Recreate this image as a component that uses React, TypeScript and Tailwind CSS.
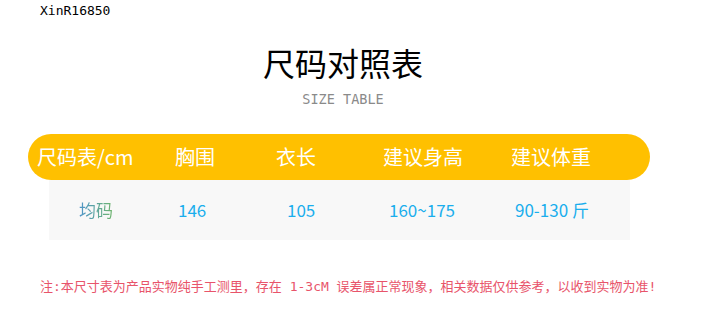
const HEAD = [
  { label: "尺码表/cm", w: "w-[138px]" },
  { label: "胸围", w: "w-[101px]" },
  { label: "衣长", w: "w-[107px]" },
  { label: "建议身高", w: "w-[128px]" },
  { label: "建议体重", w: "w-[120px]" },
];

const ROW = [
  { value: "146", w: "w-[109px]" },
  { value: "105", w: "w-[102px]" },
  { value: "160~175", w: "w-[126px]" },
  { value: "90-130 斤", w: "w-[110px]" },
];

const cjk = "font-['Noto_Sans_CJK_SC',sans-serif]";
const mono = "font-['DejaVu_Sans_Mono','Noto_Sans_CJK_SC',monospace]";

export default function App() {
  return (
    <div className="w-[722px] h-[325px] bg-white overflow-hidden">
      <div className={`${mono} pl-[40px] pt-[2px] text-[13px] leading-[18px] text-black`}>XinR16850</div>

      {/* Title */}
      <div className="w-[622px] ml-[28px] flex flex-col items-center pl-[8px]">
        <h1 className={`${cjk} mt-[20px] text-[32px] leading-[44px] text-black`}>尺码对照表</h1>
        <div className={`${mono} mt-[7px] text-[13.5px] leading-[16px] text-[#8a8a8a]`}>SIZE TABLE</div>
      </div>

      {/* Table */}
      <div className="mt-[27px] ml-[28px] w-[622px]">
        <div className="h-[46px] rounded-full bg-[#ffc000] flex items-center pl-[9px]">
          {HEAD.map((h) => (
            <div key={h.label} className={`${h.w} ${cjk} text-[20px] leading-[28px] text-white whitespace-nowrap`}>
              {h.label}
            </div>
          ))}
        </div>
        <div className="ml-[21px] w-[581px] h-[60px] bg-[#f8f8f8] flex items-center pl-[30px]">
          <div className={`w-[99px] ${cjk} text-[17px] leading-[24px]`}>
            <span className="bg-gradient-to-r from-[#4f93c8] to-[#6fb46a] bg-clip-text text-transparent">均码</span>
          </div>
          {ROW.map((r) => (
            <div key={r.value} className={`${r.w} ${cjk} text-[17px] leading-[24px] text-[#1aaeed] whitespace-nowrap`}>
              {r.value}
            </div>
          ))}
        </div>
      </div>

      {/* Note */}
      <p className={`${mono} mt-[38px] pl-[40px] text-[13px] leading-[18px] text-[#e8546a] whitespace-nowrap`}>
        注:本尺寸表为产品实物纯手工测里，存在 1-3cM 误差属正常现象，相关数据仅供参考，以收到实物为准!
      </p>
    </div>
  );
}
